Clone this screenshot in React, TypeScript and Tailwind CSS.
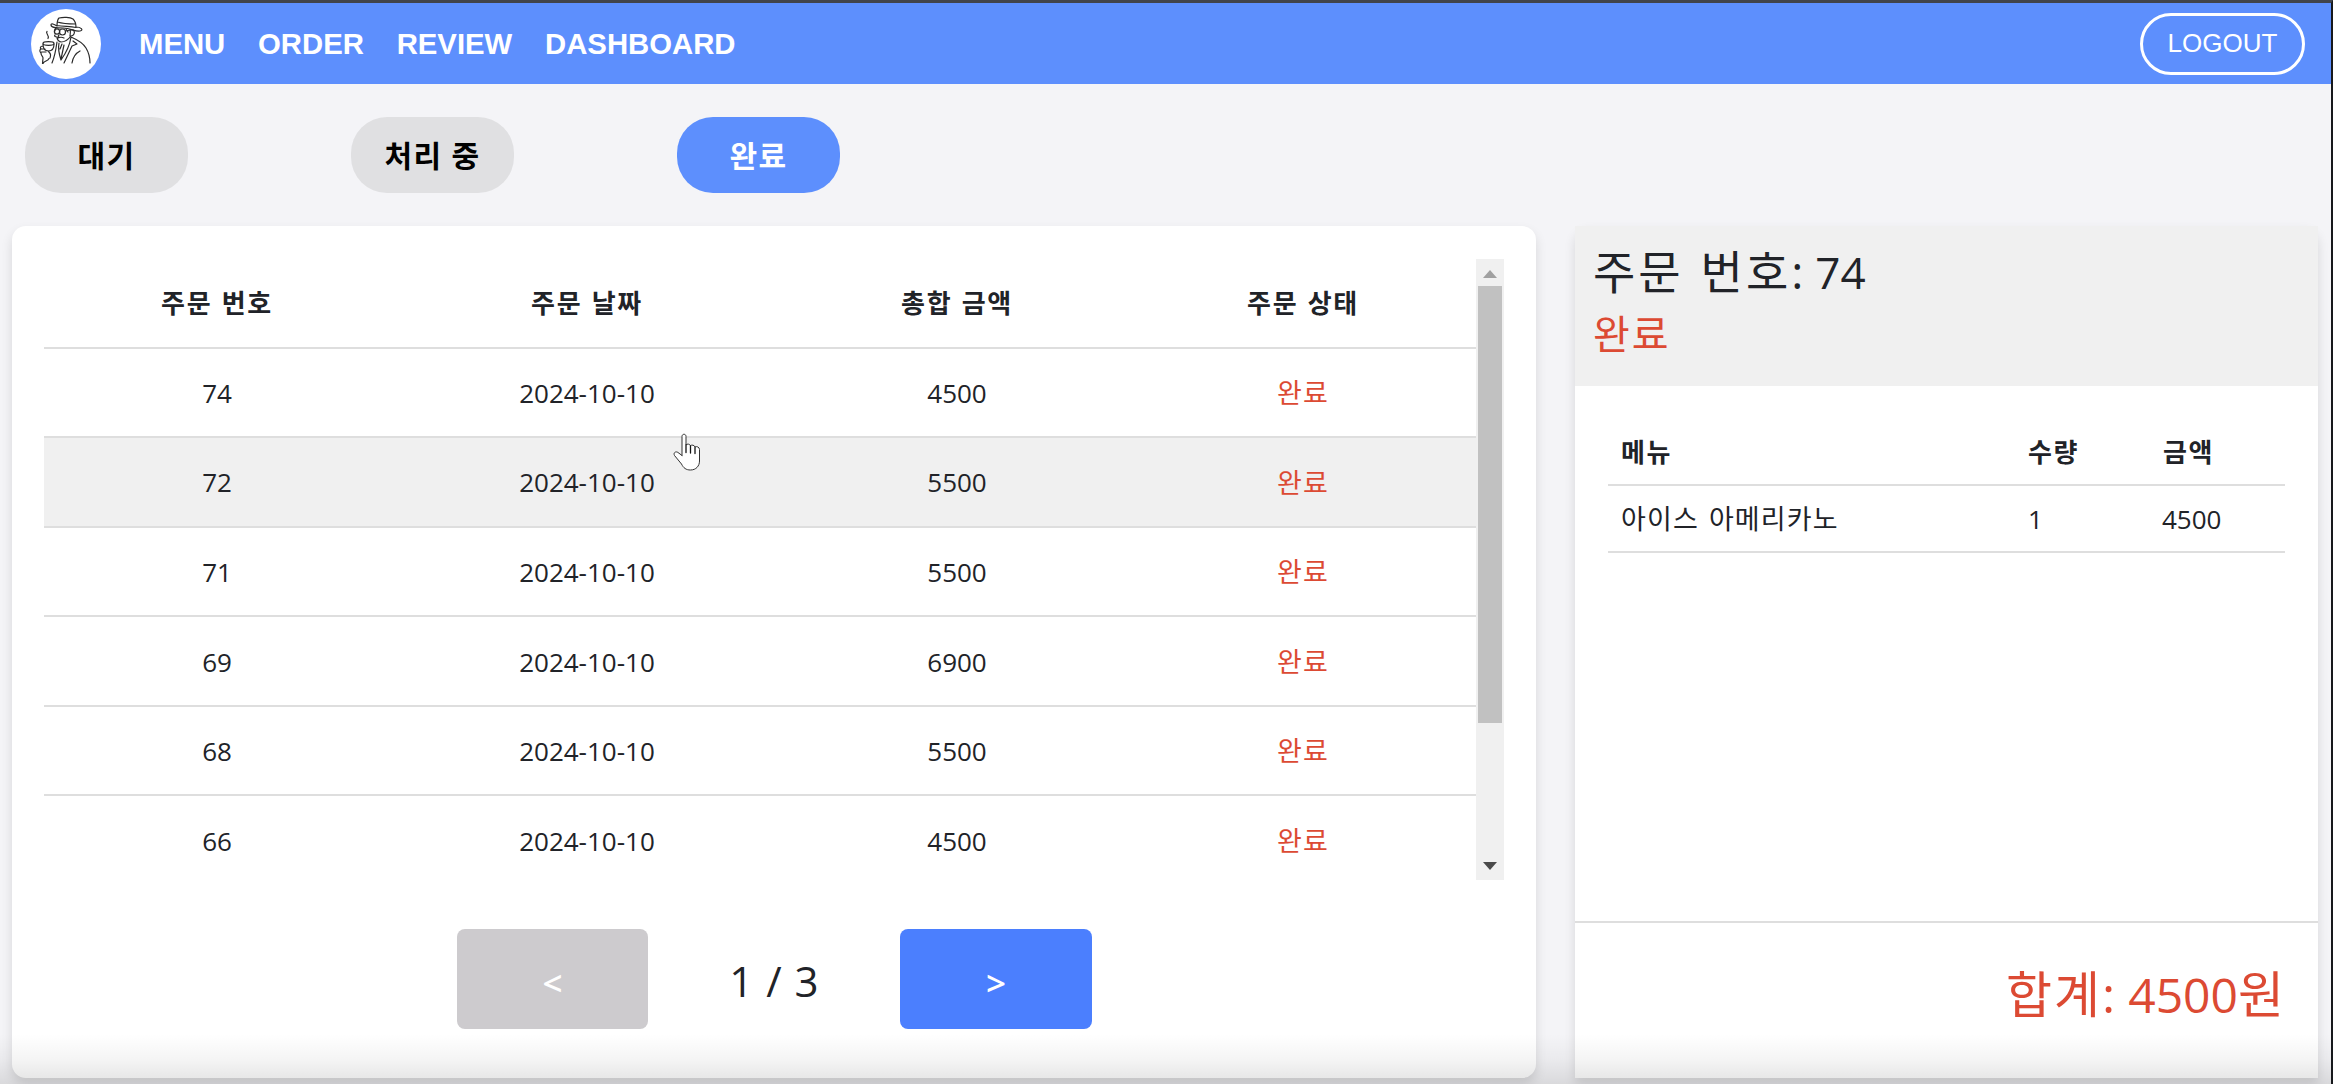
import React from "react";

const orders = [
  { id: 74, date: "2024-10-10", total: 4500 },
  { id: 72, date: "2024-10-10", total: 5500 },
  { id: 71, date: "2024-10-10", total: 5500 },
  { id: 69, date: "2024-10-10", total: 6900 },
  { id: 68, date: "2024-10-10", total: 5500 },
  { id: 66, date: "2024-10-10", total: 4500 },
];

const sans = "font-['Open_Sans','Noto_Sans_CJK_KR',sans-serif]";
const columns = "grid grid-cols-[346px_394px_346px_346px]";
const hangul = "text-[27px] tracking-[1.1px] [word-spacing:2px]";
const headCell = "text-[26px] tracking-[1.7px] [word-spacing:1px]";

function Logo() {
  return (
    <svg viewBox="0 0 70 70" className="size-[70px] shrink-0 rounded-full bg-white" fill="none" stroke="#2b2b2b" strokeWidth="1.2" strokeLinecap="round" strokeLinejoin="round">
      <path d="M26 17c-3-2-6-3-6-1 0 3 6 3 12 3 8 0 12 4 17 3 4-1 1-4-4-4M26 17c0-3 0-6 2-8 4-1 11-1 14 1 2 2 3 5 3 8M26.500 13c6 2 12 2 18 2M26 16.500c7 1 13 1 19 2" />
      <path d="M24.500 19.500l-1 3M24 26c-1 1 0 2 2 2 0 2 1 4 4 5 4 0 7-2 10-6M40 21c3-1 4 2 3 4-1 2-2 2-3 2M39 21c1 2 0 4 0 6M28 26c-1 1-1 2 0 2M27 29c2-1 4-1 6 0M35 20l2 3" />
      <circle cx="26" cy="22.500" r="2.600" />
      <circle cx="31.500" cy="23" r="3" />
      <path d="M34.500 22l5-1" />
      <path d="M16 22.500c-2 2 3 4 1 7" />
      <ellipse cx="17.500" cy="34.500" rx="5.500" ry="1.800" />
      <path d="M12 35c0 4 2 7 5.500 7s5.500-3 5.500-7M12 37c-3 0-3 2-2 3-2 1-1 3 0 4 0 3 2 3 2 5l-.500 5.500M10 40h4M10.500 43h4.500M17 42c3 3 3 4 2 7M12 54.500c1-3 5-2 6-5" />
      <path d="M40 28c7 3 12 6 15 11 3 5 4 10 4 15M26 33c-1 7-2 14-5 21M28 34c-1 5 0 11 2 17M40 28c-1 7-5 16-10 23M42 32l4 3-5 2-8 17M31 35l-2 5M33 36l-3 14M41 54c1-6 4-10 8-12" />
    </svg>
  );
}

function Header() {
  return (
    <header className="flex h-[81px] items-center bg-[#5d8ffd] pl-[31px] pr-[26px] font-['Liberation_Sans',Arial,sans-serif] text-white">
      <Logo />
      <nav className="ml-[38px] flex gap-[32.8px] text-[29.3px] font-bold">
        <a>MENU</a>
        <a>ORDER</a>
        <a>REVIEW</a>
        <a>DASHBOARD</a>
      </nav>
      <button className="ml-auto h-[62px] w-[165px] rounded-full border-[3px] border-white text-[26px]">LOGOUT</button>
    </header>
  );
}

function Tab({ label, active = false }: { label: string; active?: boolean }) {
  return (
    <button className={`h-[76px] w-[163px] rounded-[36px] pt-px text-[30px] font-bold tracking-[1.3px] ${active ? "bg-[#5d8ffd] text-white" : "bg-[#e0e0e2] text-black"}`}>
      {label}
    </button>
  );
}

function Scrollbar() {
  return (
    <div className="flex w-7 flex-col items-center bg-[#f0f0f0]">
      <svg viewBox="0 0 14 8" className="mt-[11px] h-2 w-3.5 shrink-0"><path d="M0 8 7 0l7 8z" fill="#a0a0a0" /></svg>
      <div className="mt-2 h-[437px] w-6 shrink-0 bg-[#c1c1c1]" />
      <svg viewBox="0 0 14 8" className="mb-2.5 mt-auto h-2 w-3.5 shrink-0"><path d="M0 0 7 8l7-8z" fill="#4a4a4a" /></svg>
    </div>
  );
}

function Orders() {
  return (
    <section className="relative h-[852px] w-[1524px] rounded-[14px] bg-white pl-8 pt-[33px] shadow-[0_6px_12px_rgba(0,0,0,0.12)]">
      <div className="flex h-[621px] overflow-hidden">
        <div className="w-[1432px] text-center text-[26px]">
          <div className={`${columns} ${headCell} h-[89.5px] items-center border-b-2 border-[#dedede] pt-0.5 font-bold`}>
            <span>주문 번호</span>
            <span>주문 날짜</span>
            <span>총합 금액</span>
            <span>주문 상태</span>
          </div>
          {orders.map((o) => (
            <div key={o.id} className={`${columns} h-[89.6px] items-center border-b-2 border-[#dedede] pt-0.5 ${o.id === 72 ? "bg-[#f0f0f0]" : ""}`}>
              <span>{o.id}</span>
              <span>{o.date}</span>
              <span>{o.total}</span>
              <span className={`${hangul} text-[#dc4a33]`}>완료</span>
            </div>
          ))}
        </div>
        <Scrollbar />
      </div>
      <div className="mt-[49px] flex items-center pl-[413px]">
        <button className="h-[100px] w-[191px] rounded-lg bg-[#cdcbce] pt-2 text-[35px] font-semibold text-white">&lt;</button>
        <span className="w-[252px] pt-[3px] text-center text-[42px] [word-spacing:2px]">1 / 3</span>
        <button className="h-[100px] w-[192px] rounded-lg bg-[#4b7ffe] pt-2 text-[35px] font-semibold text-white">&gt;</button>
      </div>
      <svg viewBox="0 0 28 38" className="absolute left-[661px] top-[207px] h-[38px] w-7">
        <path d="M9 22.500V3.500C9 .5 13 .5 13 3.500V12c1-1.500 4-1 4.500.8 1.200-1.400 4-.6 4.500 1.200 1.500-1 4.500 0 4.500 2.500V28c0 5-3.500 9-9 9-4.500 0-7-2-9-6L1.500 22.500c-1.500-3 1.500-4.500 3.500-3L9 22.500" fill="white" stroke="#333" strokeWidth="1" strokeLinecap="round" strokeLinejoin="round" />
        <path d="M13 12v7.500M17.500 13v7M22 14.500v6" fill="none" stroke="#111" strokeWidth="1.300" strokeLinecap="round" />
      </svg>
    </section>
  );
}

function Detail() {
  return (
    <section className="flex h-[852px] w-[743px] flex-col overflow-hidden bg-white">
      <div className="h-40 bg-[#f0f0f0] pl-[18px] pt-[15px]">
        <h1 className="text-[46px] leading-[60px]">
          <span className="tracking-[3px] [word-spacing:2px]">주문 번호</span>: <span className="text-[44px]">74</span>
        </h1>
        <p className="text-[40px] leading-[64px] tracking-[2px] text-[#dc4a33]">완료</p>
      </div>
      <div className="mx-[33px] mt-8 text-[26px]">
        <div className={`${headCell} grid h-[68px] grid-cols-[407px_135px_1fr] items-center border-b-2 border-[#dedede] pl-[13px] pt-0.5 font-bold`}>
          <span>메뉴</span>
          <span>수량</span>
          <span>금액</span>
        </div>
        <div className="grid h-[67px] grid-cols-[407px_134px_1fr] items-center border-b-2 border-[#dedede] pl-[13px] pt-0.5">
          <span className={hangul}>아이스 아메리카노</span>
          <span>1</span>
          <span>4500</span>
        </div>
      </div>
      <div className="mt-auto h-[157px] border-t-2 border-[#dedede] pr-[34px] pt-[36px] text-right text-[50px] leading-[70px] text-[#dc4a33]">
        <span className="tracking-[2px]">합계</span>: <span className="text-[48px]">4500</span>원
      </div>
    </section>
  );
}

export default function App() {
  return (
    <div className={`relative h-[1084px] w-[2333px] overflow-hidden border-r-2 border-t-[3px] border-r-[#16181c] border-t-[#41444a] bg-[#f4f4f7] text-[#212328] ${sans}`}>
      <Header />
      <div className="flex gap-[163px] pl-[25px] pt-[33px]">
        <Tab label="대기" />
        <Tab label="처리 중" />
        <Tab label="완료" active />
      </div>
      <main className="mt-[33px] flex gap-[39px] pl-3">
        <Orders />
        <div className="rounded-t-[14px] shadow-[0_6px_12px_rgba(0,0,0,0.12)]">
          <Detail />
        </div>
      </main>
      <div className="pointer-events-none absolute inset-x-0 bottom-0 h-[50px] bg-gradient-to-b from-transparent via-black/4 to-black/11" />
    </div>
  );
}
